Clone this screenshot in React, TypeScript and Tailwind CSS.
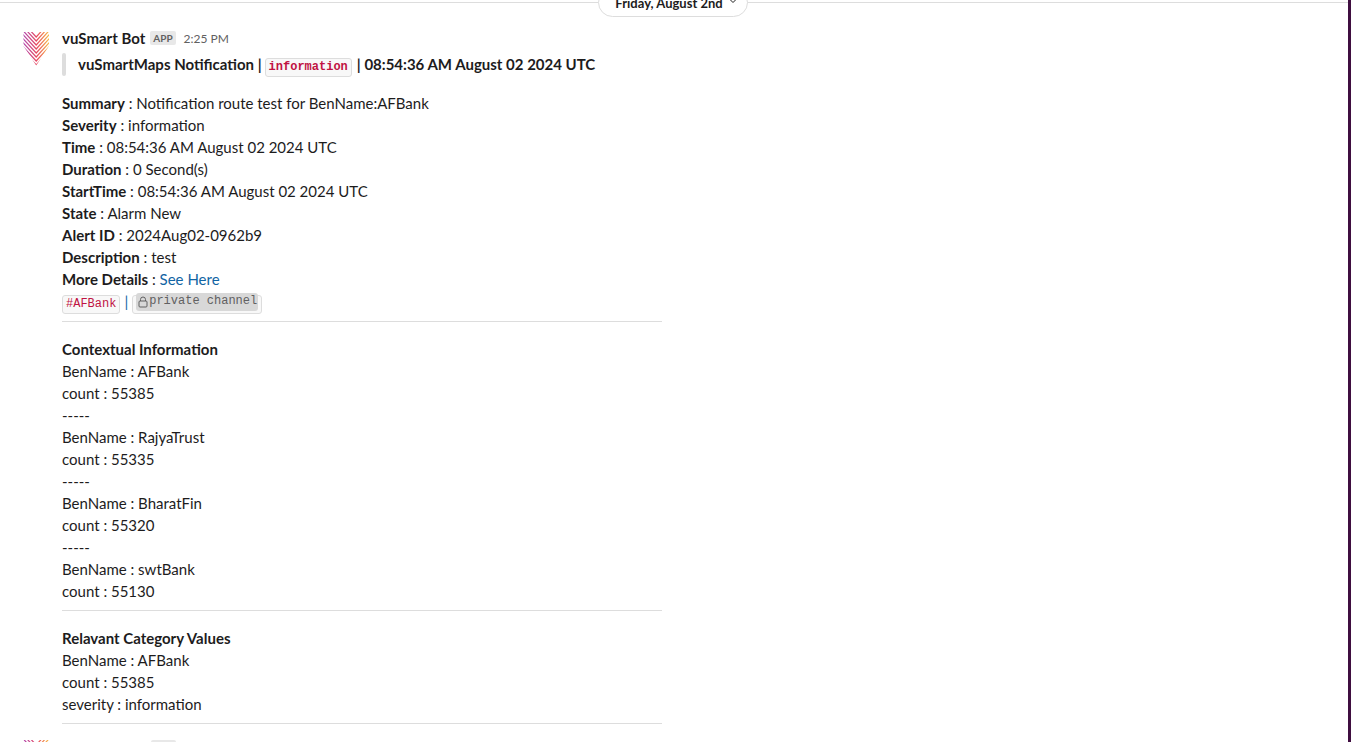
const chevrons = [6, 10, 14, 18, 22, 26, 30, 34];

function Logo({ className }: { className: string }) {
  return (
    <svg className={className} viewBox="0 0 36 36" fill="none">
      <defs>
        <linearGradient id="vuGrad" x1="5" y1="0" x2="31" y2="0" gradientUnits="userSpaceOnUse">
          <stop offset="0" stopColor="#a832a8" />
          <stop offset="0.55" stopColor="#e8384f" />
          <stop offset="1" stopColor="#f7b733" />
        </linearGradient>
        <clipPath id="vuClip">
          <path d="M5.5 1H31V15L18.2 34.5L5.5 15Z" />
        </clipPath>
      </defs>
      <g clipPath="url(#vuClip)" opacity="0.9">
        {chevrons.map((y) => (
          <path key={y} d={`M-2 ${y - 22}L18.2 ${y}L38 ${y - 22}`} stroke="url(#vuGrad)" strokeWidth="1.2" />
        ))}
      </g>
    </svg>
  );
}

function Field({ label, children }: { label: string; children: React.ReactNode }) {
  return (
    <div>
      <b className="font-bold">{label}</b> : {children}
    </div>
  );
}

function Divider() {
  return <div className="h-px w-[600px] bg-[#dddddd]" />;
}

function Lines({ items }: { items: string[] }) {
  return (
    <>
      {items.map((t, i) => (
        <div key={i}>{t}</div>
      ))}
    </>
  );
}

export default function App() {
  return (
    <div className="flex h-[742px] w-full overflow-hidden bg-white font-['Lato','Liberation_Sans',sans-serif] text-[15px] leading-[22px] text-[#1d1c1d]">
      <div className="relative min-w-0 flex-1">
        <div className="mt-[2px] h-px bg-[#dddddd]" />
        <div className="absolute left-[598px] top-[-12px] flex h-[29px] w-[150px] items-center justify-center gap-[5px] rounded-[15px] border border-[#dddddd] bg-white pl-[7px] text-[13px] font-bold">
          <span>Friday, August 2nd</span>
          <svg className="mb-[3px] h-[10px] w-[10px]" viewBox="0 0 10 10" fill="none" stroke="#1d1c1d" strokeWidth="1">
            <path d="M2 3.5L5 6.5L8 3.5" />
          </svg>
        </div>

        <div className="flex pl-[18px] pt-[24px]">
          <Logo className="mt-[4px] h-[36px] w-[36px] shrink-0" />
          <div className="ml-[8px] min-w-0 flex-1">
            <div className="flex h-[22px] items-center">
              <span className="font-bold">vuSmart Bot</span>
              <span className="ml-[5px] flex h-[14px] items-center rounded-[2px] bg-[#e8e8e8] px-[3px] text-[10px] font-bold text-[#616061]">APP</span>
              <span className="ml-[8px] mt-[2px] text-[12px] text-[#616061]">2:25 PM</span>
            </div>

            <div className="mt-[4px] flex h-[22px] items-center">
              <div className="h-[23px] w-1 rounded-[2px] bg-[#dddddd]" />
              <div className="ml-3 flex items-center font-bold">
                <span>vuSmartMaps Notification |</span>
                <code className="ml-[3px] mr-[5px] mt-[6px] rounded-[3px] border border-[#dddddd] bg-[#f8f8f8] px-[3px] font-['Liberation_Mono',monospace] text-[12px] leading-[17px] text-[#c01343]">information</code>
                <span>| 08:54:36 AM August 02 2024 UTC</span>
              </div>
            </div>

            <div className="mt-[17px]">
              <Field label="Summary">Notification route test for BenName:AFBank</Field>
              <Field label="Severity">information</Field>
              <Field label="Time">08:54:36 AM August 02 2024 UTC</Field>
              <Field label="Duration">0 Second(s)</Field>
              <Field label="StartTime">08:54:36 AM August 02 2024 UTC</Field>
              <Field label="State">Alarm New</Field>
              <Field label="Alert ID">2024Aug02-0962b9</Field>
              <Field label="Description">test</Field>
              <Field label="More Details">
                <span className="text-[#1264a3]">See Here</span>
              </Field>
              <div className="flex h-[22px] items-center">
                <code className="mt-[6px] rounded-[3px] border border-[#dddddd] bg-[#f8f8f8] px-[3px] font-['Liberation_Mono',monospace] text-[12px] leading-[17px] text-[#c01343]">#AFBank</code>
                <span className="mx-[4px] text-[#1264a3]">|</span>
                <span className="mt-[6px] h-[19px] rounded-[3px] border border-[#dddddd] bg-[#f8f8f8] px-[3px]">
                  <span className="-mt-[3px] flex h-[18px] items-center rounded-[3px] bg-[#d8d8d8] pr-px font-['Liberation_Mono',monospace] text-[12px] leading-[17px] text-[#616061]">
                    <svg className="ml-[2px] h-[12px] w-[11px]" viewBox="0 0 11 12" fill="none" stroke="#616061" strokeWidth="1">
                      <rect x="1" y="5" width="8" height="6" rx="1" />
                      <path d="M2.5 5V3.5a2.5 2.5 0 0 1 5 0V5" />
                    </svg>
                    private channel
                  </span>
                </span>
              </div>
            </div>

            <div className="mt-[9px]"><Divider /></div>

            <div className="mt-[16px]">
              <b className="font-bold">Contextual Information</b>
              <Lines items={["BenName : AFBank", "count : 55385", "-----", "BenName : RajyaTrust", "count : 55335", "-----", "BenName : BharatFin", "count : 55320", "-----", "BenName : swtBank", "count : 55130"]} />
            </div>

            <div className="mt-[8px]"><Divider /></div>

            <div className="mt-[16px]">
              <b className="font-bold">Relavant Category Values</b>
              <Lines items={["BenName : AFBank", "count : 55385", "severity : information"]} />
            </div>

            <div className="mt-[8px]"><Divider /></div>
          </div>
        </div>

        <div className="flex pl-[18px] pt-[15px]">
          <Logo className="h-[36px] w-[36px] shrink-0" />
          <span className="ml-[97px] mt-px h-[14px] w-[25px] rounded-[2px] bg-[#e8e8e8]" />
        </div>
      </div>
      <div className="w-[3px] shrink-0 bg-[#3f0e40]" />
    </div>
  );
}
